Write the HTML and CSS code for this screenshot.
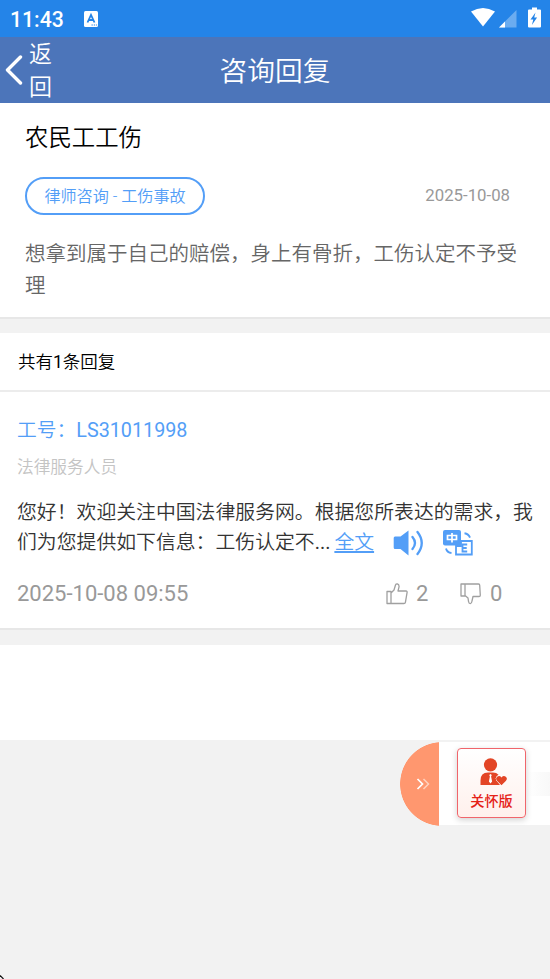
FILE: index.html
```html
<!DOCTYPE html>
<html lang="zh-CN">
<head>
<meta charset="utf-8">
<title>咨询回复</title>
<link rel="stylesheet" href="styles.css">
</head>
<body>
<div class="status">
  <span class="clock">11:43</span>
  <svg class="app-badge" viewBox="0 0 14 16"><rect width="14" height="16" rx="1.5" fill="#fff"/><path d="M3.5 11.5 7 3.8l3.5 7.7M4.8 9h4.4" fill="none" stroke="#2484e8" stroke-width="1.8"/><path d="M7.5 14h1.3m1 0h1.3m1 0h1" stroke="#2484e8" stroke-width="1.2"/></svg>
  <svg class="signals" viewBox="0 0 70 21"><path d="M0 4.600Q12-2.800 24 4.600L12 19.500Z" fill="#fff"/><path d="M28 20.500 45.500 3v17.500Z" fill="#6bacf0"/><path d="M28 20.500 34 14.500v6Z" fill="#fff"/><path d="M58 2.500h3v-2h5v2h3q1 0 1 1v16q0 1-1 1h-11q-1 0-1-1v-16q0-1 1-1z" fill="#fff"/><path d="M64.500 5.500 59.500 12.500h2.800l-1.400 5.500 5.200-7.500h-2.900Z" fill="#2484e8"/></svg>
</div>
<header class="navbar">
  <svg class="chevron" viewBox="0 0 18 30"><path d="M15.500 2 2.500 15l13 13" fill="none" stroke="#fff" stroke-width="3.400" stroke-linecap="round" stroke-linejoin="round"/></svg>
  <span class="back">返回</span>
  <h1>咨询回复</h1>
</header>
<section class="question">
  <h2>农民工工伤</h2>
  <div class="meta"><span class="tag">律师咨询 - 工伤事故</span><time>2025-10-08</time></div>
  <p>想拿到属于自己的赔偿，身上有骨折，工伤认定不予受理</p>
</section>
<div class="count">共有<span class="latin">1</span>条回复</div>
<article class="reply">
  <div class="worker">工号：<span class="latin">LS31011998</span></div>
  <div class="role">法律服务人员</div>
  <div class="answer">您好！欢迎关注中国法律服务网。根据您所表达的需求，我<br>
    <div class="answer-end"><span>们为您提供如下信息：工伤认定不<span class="latin">...</span></span><a>全文</a>
      <svg class="speaker" viewBox="0 0 32 26"><path d="M2 6.500h5.500L15.500.6v24.800L7.500 19H2Q.7 19 .7 17.500V8Q.7 6.500 2 6.500Z" fill="#539ef7"/><path d="M19.500 7q5 6 0 12M24.500 2q8.500 11 0 22" fill="none" stroke="#539ef7" stroke-width="2.300" stroke-linecap="round"/></svg>
      <svg class="translate" viewBox="0 0 30 26"><rect width="18" height="15.500" rx="2" fill="#539ef7"/><path d="M4.500 5.500h9v4h-9zM9 3v9.500" fill="none" stroke="#fff" stroke-width="1.700"/><path d="M18 11h10.800v13.500H13V16h5Z" fill="#fff" stroke="#539ef7" stroke-width="1.800"/><path d="M24.200 14.500H19.500v7h4.700M19.500 18h4.200" fill="none" stroke="#539ef7" stroke-width="1.800"/><path d="M21.500 3.200q4 .5 5.500 4.500M3 18.500q1 4 5.500 4.500" fill="none" stroke="#539ef7" stroke-width="1.900"/></svg>
    </div>
  </div>
  <footer class="reply-foot">
    <time>2025-10-08 09:55</time>
    <svg class="thumb up" viewBox="0 0 22 22"><path d="M1 8.500h4v12H1zM5 10l3-3 1.500-5Q10 .8 11.500 1t1.600 2.600L12 8h8q1.300 0 1.100 1.300l-1.700 10q-.2 1.200-1.500 1.200H5" fill="none" stroke="#a0a0a0" stroke-width="1.300" stroke-linejoin="round"/></svg>
    <span class="up-count">2</span>
    <svg class="thumb down" viewBox="0 0 22 22"><path d="M1 1h4v12H1zM5 1h13.500q1.200 0 1.200 1.200l.6 10q0 1.300-1.300 1.300h-6l-1 4.500q-.3 2.500-1.700 2.700-1.500 0-1.700-1.900L8 15l-3-2.500" fill="none" stroke="#a0a0a0" stroke-width="1.300" stroke-linejoin="round"/></svg>
    <span class="down-count">0</span>
  </footer>
</article>
<div class="blank"></div>
<aside class="care">
  <div class="handle"><svg viewBox="0 0 14 12"><path d="m1.500 1 5 5-5 5" fill="none" stroke="#fff" stroke-width="1.700"/><path d="m7.500 1 5 5-5 5" fill="none" stroke="#ffd1bd" stroke-width="1.500"/></svg></div>
  <div class="panel">
    <div class="care-card">
      <svg viewBox="0 0 28 28"><circle cx="10.500" cy="6.800" r="6.600" fill="#e34526"/><path d="M.5 27v-4.500Q.5 14.500 8 14.500h5q3.500 0 5.500 2.300-4 2.200-1.900 6l3.400 4.200Z" fill="#e34526"/><path d="m9.200 17 1.300-1 1.300 1-.7 1.500 1 5-1.600 2-1.600-2 1-5Z" fill="#fff"/><path d="M21.500 27.200 17.200 23q-2.200-2.500 0-4.300 2.400-1.600 4.300.8 1.900-2.400 4.300-.8 2.200 1.800 0 4.300Z" fill="#e34526" stroke="#fff" stroke-width="1" paint-order="stroke"/></svg>
      <span>关怀版</span>
    </div>
  </div>
</aside>
<svg class="corner" viewBox="0 0 4 4"><path d="M0 .5 3.500 4" stroke="#111" stroke-width="1.200"/></svg>
</body>
</html>
```
FILE: styles.css
```css
* { box-sizing: border-box; }
body {
  margin: 0;
  height: 979px;
  overflow: hidden;
  position: relative;
  background: #f2f2f2;
  font-family: Roboto, "Noto Sans CJK SC", sans-serif;
  font-weight: 350;
}
svg { display: block; flex: none; }
h1, h2, p { margin: 0; font-weight: inherit; }
time, .latin { font-weight: 400; }
.status {
  height: 37px;
  padding-left: 10px;
  display: flex;
  align-items: center;
  background: #2484e8;
  color: #fff;
}
.clock { width: 74px; padding-top: 2px; font-size: 21.2px; font-weight: 500; line-height: 35px; }
.app-badge { width: 14px; height: 16px; }
.signals { width: 70px; height: 21px; margin: -2px 9px 0 auto; }
.navbar {
  position: relative;
  height: 66px;
  display: flex;
  align-items: center;
  padding-left: 5px;
  background: #4c75ba;
  color: #fff;
}
.chevron { width: 18px; height: 30px; }
.back { width: 24px; margin-left: 6px; padding-top: 2px; font-size: 23px; line-height: 33px; }
h1 { position: absolute; left: 0; width: 100%; text-align: center; font-size: 27.7px; line-height: 66px; padding-top: 4px; }
.question {
  height: 216px;
  padding: 18px 25px 0;
  background: #fff;
  border-bottom: 2px solid #e7e7e7;
}
h2 { font-size: 23.4px; line-height: 34px; color: #000; }
.meta { margin-top: 22px; display: flex; align-items: center; justify-content: space-between; }
.tag {
  width: 180px;
  height: 38px;
  border: 2px solid #539ef7;
  border-radius: 19px;
  color: #539ef7;
  font-size: 16.1px;
  line-height: 35px;
  text-align: center;
  white-space: nowrap;
}
.meta time { margin: -2px 15px 0 0; color: #999; font-size: 16.8px; }
.question p { margin-top: 23px; font-size: 20.5px; line-height: 32px; color: #666; }
.count {
  margin-top: 14px;
  height: 59px;
  padding-left: 18px;
  background: #fff;
  border-bottom: 2px solid #ececec;
  font-size: 17.5px;
  line-height: 58px;
  color: #000;
}
.reply { height: 238px; padding: 24px 17px 0; background: #fff; border-bottom: 2px solid #e7e7e7; }
.worker { color: #539ef7; font-size: 19.75px; line-height: 30px; }
.role { margin-top: 9px; color: #c4c4c4; font-size: 16.7px; line-height: 26px; }
.answer { margin-top: 17px; color: #333; font-size: 19.85px; line-height: 30px; white-space: nowrap; }
.answer-end { display: flex; align-items: center; height: 30px; }
.answer a { margin-left: 4px; color: #539ef7; text-decoration: underline; text-underline-offset: 2px; text-decoration-thickness: 1.5px; }
.speaker { width: 32px; height: 26px; margin-left: 19px; }
.translate { width: 30px; height: 26px; margin-left: 18px; }
.reply-foot { margin-top: 20px; display: flex; align-items: center; height: 30px; color: #999; font-size: 22px; font-weight: 400; }
.reply-foot time { width: 369px; }
.thumb { width: 22px; height: 22px; margin-top: 1px; }
.up-count { width: 52px; padding-left: 8px; }
.down-count { padding-left: 8px; }
.blank { margin-top: 15px; height: 95px; background: #fff; }
.care { margin-top: 2px; display: flex; height: 84px; padding-left: 400px; }
.handle {
  width: 39px;
  height: 84px;
  background: radial-gradient(circle at 42px 42px, #ff976f 41.5px, transparent 42.2px);
  display: flex;
  align-items: center;
  padding-left: 16px;
}
.handle svg { width: 14px; height: 12px; }
.panel { flex: 1; height: 83px; padding: 6px 0 0 18px; background: linear-gradient(90deg, rgba(255, 255, 255, 0) 78%, #f8f8f8) 0 30px / 100% 24px no-repeat #fff; }
.care-card {
  width: 69px;
  height: 70px;
  border: 1.5px solid #f0656b;
  border-radius: 4px;
  background: linear-gradient(#fff, #fff0ec);
  box-shadow: 0 2px 6px rgba(0, 0, 0, .18);
  display: flex;
  flex-direction: column;
  align-items: center;
  padding-top: 9px;
}
.care-card svg { width: 28px; height: 28px; margin-left: 4px; }
.care-card span { margin-top: 5px; color: #e52218; font-size: 14.2px; line-height: 21px; font-weight: 500; }
.corner { position: absolute; left: 0; bottom: 0; width: 4px; height: 4px; }
```
